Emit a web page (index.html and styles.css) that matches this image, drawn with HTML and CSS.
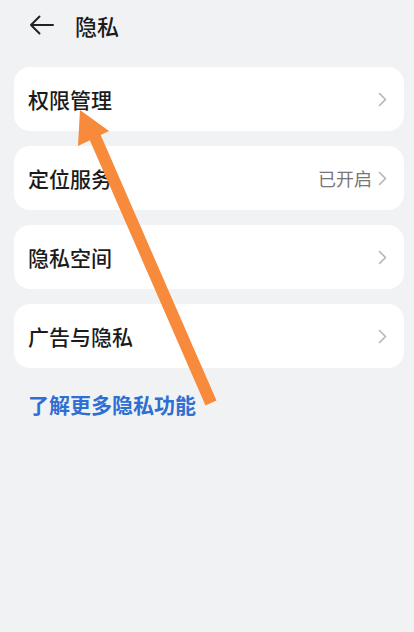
FILE: index.html
```html
<!DOCTYPE html>
<html lang="zh-CN">
<head>
<meta charset="utf-8">
<title>隐私</title>
<link rel="stylesheet" href="styles.css">
</head>
<body>
<div class="page">
  <header class="topbar">
    <svg class="back" width="26" height="22" viewBox="0 0 26 22"><path d="M2 11 H24 M10.5 2.5 L2 11 L10.5 19.5" fill="none" stroke="#222" stroke-width="2" stroke-linecap="round" stroke-linejoin="round"/></svg>
    <h1 class="title">隐私</h1>
  </header>
  <main class="list">
    <div class="card"><span class="label">权限管理</span><span class="right"><svg class="chev" width="9" height="15" viewBox="0 0 9 15"><path d="M1.5 1.5 L7.5 7.5 L1.5 13.5" fill="none" stroke="#b5b5b5" stroke-width="1.6" stroke-linecap="round" stroke-linejoin="round"/></svg></span></div>
    <div class="card"><span class="label">定位服务</span><span class="right"><span class="value">已开启</span><svg class="chev" width="9" height="15" viewBox="0 0 9 15"><path d="M1.5 1.5 L7.5 7.5 L1.5 13.5" fill="none" stroke="#b5b5b5" stroke-width="1.6" stroke-linecap="round" stroke-linejoin="round"/></svg></span></div>
    <div class="card"><span class="label">隐私空间</span><span class="right"><svg class="chev" width="9" height="15" viewBox="0 0 9 15"><path d="M1.5 1.5 L7.5 7.5 L1.5 13.5" fill="none" stroke="#b5b5b5" stroke-width="1.6" stroke-linecap="round" stroke-linejoin="round"/></svg></span></div>
    <div class="card"><span class="label">广告与隐私</span><span class="right"><svg class="chev" width="9" height="15" viewBox="0 0 9 15"><path d="M1.5 1.5 L7.5 7.5 L1.5 13.5" fill="none" stroke="#b5b5b5" stroke-width="1.6" stroke-linecap="round" stroke-linejoin="round"/></svg></span></div>
    <a class="more" href="#">了解更多隐私功能</a>
  </main>
  <svg class="pointer" width="414" height="632" viewBox="0 0 414 632">
    <line x1="211" y1="403" x2="95" y2="137" stroke="#f78a3b" stroke-width="12" stroke-linecap="butt"/>
    <polygon points="80,110 109,131 78,146" fill="#f78a3b"/>
  </svg>
</div>
</body>
</html>
```
FILE: styles.css
```css
html, body {
  margin: 0;
  padding: 0;
  background: #f1f2f4;
}
body {
  font-family: "Noto Sans CJK SC", "Noto Sans", sans-serif;
  color: #1b1b1b;
}
.page {
  position: relative;
  width: 414px;
  height: 632px;
  overflow: hidden;
}
.topbar {
  height: 50px;
  display: flex;
  align-items: center;
  padding-left: 29px;
  gap: 20px;
}
.back {
  display: block;
}
.title {
  margin: 0;
  font-size: 22px;
  font-weight: 500;
  line-height: 1;
}
.list {
  margin-top: 17px;
  padding: 0 10px 0 14px;
  display: flex;
  flex-direction: column;
  gap: 15px;
}
.card {
  height: 64px;
  background: #ffffff;
  border-radius: 16px;
  display: flex;
  align-items: center;
  justify-content: space-between;
  padding: 0 17px 0 14px;
}
.label {
  font-size: 21px;
  font-weight: 500;
}
.right {
  display: flex;
  align-items: center;
  gap: 6px;
}
.value {
  font-size: 18px;
  color: #777;
}
.chev {
  display: block;
}
.more {
  margin-top: 6px;
  padding-left: 14px;
  font-size: 21px;
  font-weight: 700;
  color: #2f6fd3;
  text-decoration: none;
}
.pointer {
  position: absolute;
  left: 0;
  top: 0;
  pointer-events: none;
}
```
